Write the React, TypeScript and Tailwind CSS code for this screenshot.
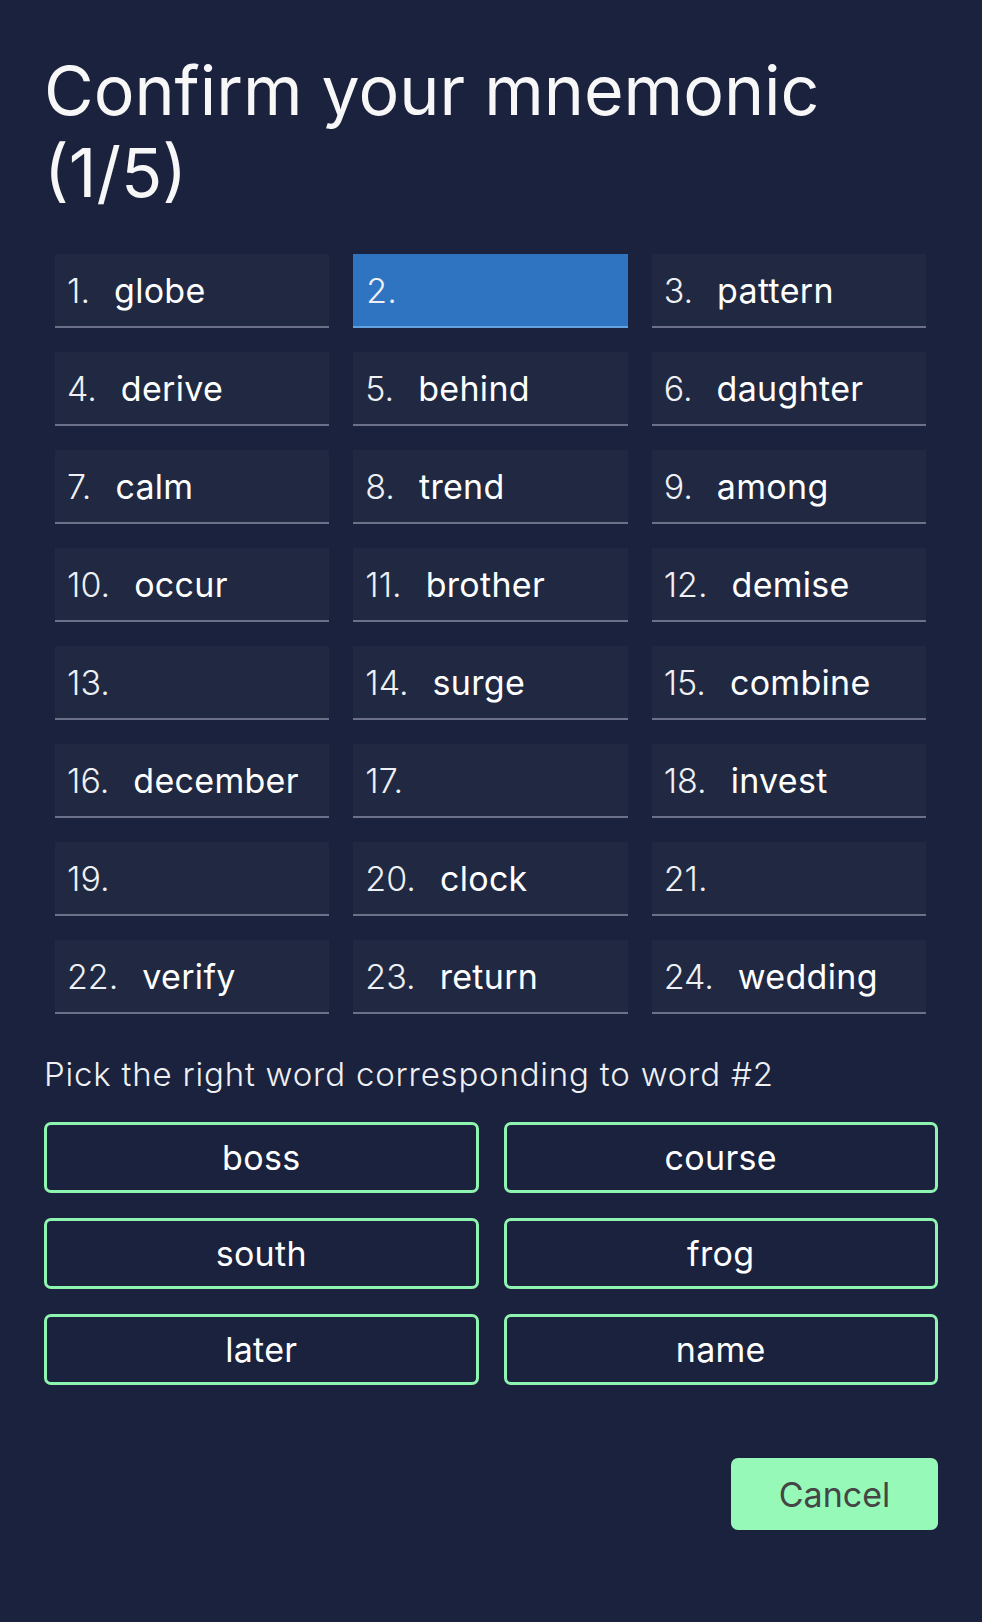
const words: string[] = [
  "globe", "", "pattern",
  "derive", "behind", "daughter",
  "calm", "trend", "among",
  "occur", "brother", "demise",
  "", "surge", "combine",
  "december", "", "invest",
  "", "clock", "",
  "verify", "return", "wedding",
];

const choices = ["boss", "course", "south", "frog", "later", "name"];

const ACTIVE = 1; // index of the word being confirmed (#2)

function WordCell({ index, word }: { index: number; word: string }) {
  const active = index === ACTIVE;
  return (
    <div
      className={
        active
          ? "flex h-[74px] items-center border-b-2 border-[#64a2df] bg-[#2f74c0] px-[13px]"
          : "flex h-[74px] items-center border-b-2 border-[#6c7189] bg-[#202941] px-[12px]"
      }
    >
      <span className="text-[34px] font-light text-[#eef0f4]">{index + 1}.</span>
      {word && (
        <span className="ml-[24px] text-[34px] tracking-[0.3px] text-white">{word}</span>
      )}
    </div>
  );
}

export default function App() {
  return (
    <div
      className="min-h-[1622px] bg-[#1a223d] px-[44px] pt-[49px] text-white"
      style={{ fontFamily: "Inter, 'Noto Sans', sans-serif" }}
    >
      <h1 className="text-[68px] font-normal leading-[82px] text-[#f7f7f8]">
        Confirm your mnemonic (1/5)
      </h1>

      <div className="ml-[11px] mr-[12px] mt-[41px] grid grid-cols-3 gap-6">
        {words.map((w, i) => (
          <WordCell key={i} index={i} word={w} />
        ))}
      </div>

      <p className="mt-[40px] text-[33px] font-light leading-[40px] tracking-[0.8px] text-[#eef0f4]">
        Pick the right word corresponding to word #2
      </p>

      <div className="mt-[28px] grid grid-cols-2 gap-[25px]">
        {choices.map((c) => (
          <button
            key={c}
            type="button"
            className="flex h-[71px] items-center justify-center rounded-[7px] border-[3px] border-[#8ef5b0] bg-[#1a223d] text-[34px] tracking-[0.3px] text-white"
          >
            {c}
          </button>
        ))}
      </div>

      <div className="mt-[73px] flex justify-end">
        <button
          type="button"
          className="flex h-[72px] w-[207px] items-center justify-center rounded-[7px] bg-[#96f9b8] text-[34px] text-[#454545]"
        >
          Cancel
        </button>
      </div>
    </div>
  );
}
